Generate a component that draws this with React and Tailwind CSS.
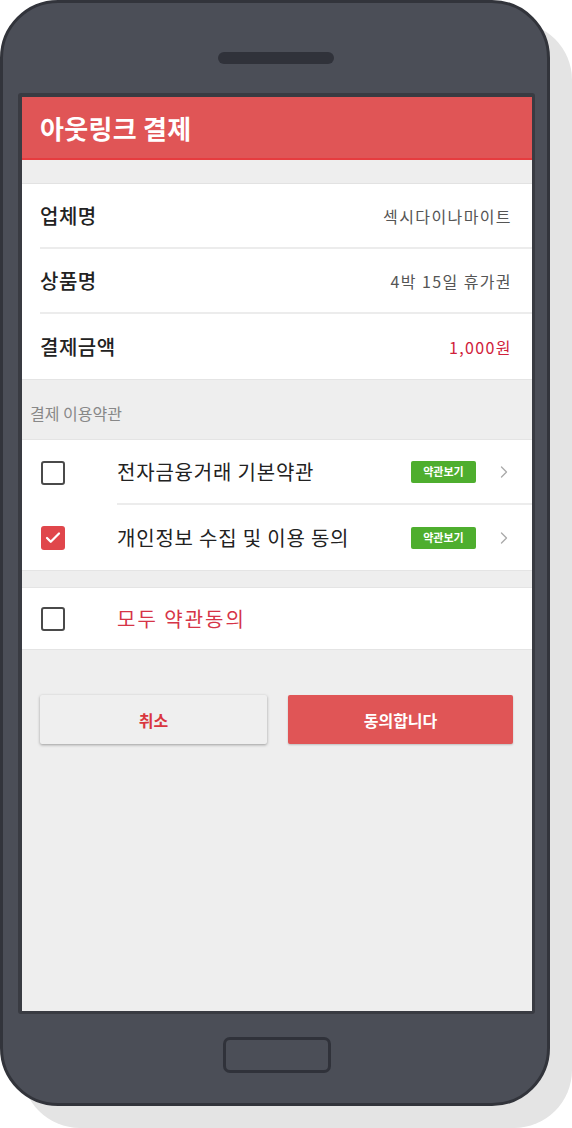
import { ChevronRight, Check } from "lucide-react";

const font = { fontFamily: '"Noto Sans CJK KR", "Noto Sans", sans-serif' };

const infoRows = [
  { label: "업체명", value: "섹시다이나마이트", red: false },
  { label: "상품명", value: "4박 15일 휴가권", red: false },
  { label: "결제금액", value: "1,000원", red: true },
];

const terms = [
  { title: "전자금융거래 기본약관", checked: false },
  { title: "개인정보 수집 및 이용 동의", checked: true },
];

function Box({ checked }) {
  if (checked) {
    return (
      <div className="w-[24px] h-[24px] rounded-[3px] bg-[#e0464b] flex items-center justify-center shrink-0">
        <Check size={18} strokeWidth={3} className="text-white" />
      </div>
    );
  }
  return <div className="w-[24px] h-[24px] rounded-[3px] border-[2.5px] border-[#4a4a4a] bg-white shrink-0" />;
}

export default function App() {
  return (
    <div className="w-[572px] h-[1128px] bg-white" style={font}>
      <div className="w-[550px] h-[1106px] rounded-[58px] bg-[#4b4e57] border-[3px] border-[#32343b] shadow-[22px_22px_0_#e4e4e4] flex flex-col">
        {/* speaker */}
        <div className="mt-[49px] ml-[215px] w-[116px] h-[12px] rounded-full bg-[#30323a]" />

        {/* screen */}
        <div className="mt-[29px] ml-[15px] w-[517px] h-[921px] border-l-4 border-t-4 border-r-[3px] border-b-[3px] border-[#393b42] rounded-[3px] bg-[#eeeeee] flex flex-col overflow-hidden">
          <div className="h-[63px] bg-[#e05556] border-b-2 border-[#e63c3f] flex items-center px-[18px]">
            <h1 className="text-white text-[26px] font-bold tracking-[0.3px]">아웃링크 결제</h1>
          </div>

          <div className="h-[23px]" />

          <div className="bg-white border-t border-[#e2e2e2]">
            {infoRows.map((r, i) => (
              <div key={r.label} className="pl-[18px]">
                <div
                  className={`h-[65px] flex items-center justify-between pr-[20px] ${
                    i < infoRows.length - 1 ? "border-b-2 border-[#ececec]" : ""
                  }`}
                >
                  <span className="text-[20px] font-medium text-[#222] tracking-[0.5px]">{r.label}</span>
                  <span className={`text-[16px] tracking-[1.4px] ${r.red ? "text-[#d0213a]" : "text-[#555]"}`}>
                    {r.value}
                  </span>
                </div>
              </div>
            ))}
          </div>

          <div className="h-[60px] border-t border-[#e4e4e4] flex items-end pb-[14px] pl-[8px]">
            <span className="text-[16px] text-[#888]">결제 이용약관</span>
          </div>

          <div className="bg-white border-t border-[#e4e4e4]">
            {terms.map((t, i) => (
              <div key={t.title} className="h-[65px] flex items-center pl-[19px]">
                <Box checked={t.checked} />
                <div
                  className={`ml-[52px] flex-1 h-full flex items-center pr-[20px] ${
                    i < terms.length - 1 ? "border-b-2 border-[#ececec]" : ""
                  }`}
                >
                  <span className="flex-1 text-[20px] text-[#222] tracking-[0.8px]">{t.title}</span>
                  <span className="w-[65px] h-[22px] rounded-[2px] bg-[#4eae2e] text-white text-[11px] font-bold flex items-center justify-center">
                    약관보기
                  </span>
                  <ChevronRight size={20} strokeWidth={1.6} className="ml-[18px] mr-[-2px] text-[#aaa]" />
                </div>
              </div>
            ))}
          </div>

          <div className="h-[17px] border-t border-[#e4e4e4]" />

          <div className="h-[63px] bg-white border-t border-[#e4e4e4] border-b border-b-[#e4e4e4] flex items-center pl-[19px]">
            <Box checked={false} />
            <span className="ml-[52px] text-[20px] text-[#d63447] tracking-[2px]">모두 약관동의</span>
          </div>

          <div className="mt-[45px] px-[18px] flex gap-[21px]">
            <button className="w-[227px] h-[49px] rounded-[2px] bg-[#efefef] shadow-[0_1px_3px_rgba(0,0,0,0.35)] text-[#d9363e] text-[16px] font-bold">
              취소
            </button>
            <button className="w-[225px] h-[49px] rounded-[2px] bg-[#e05556] shadow-[0_1px_2px_rgba(0,0,0,0.2)] text-white text-[16px] font-bold">
              동의합니다
            </button>
          </div>
        </div>

        {/* home button */}
        <div className="mt-[23px] ml-[220px] w-[108px] h-[36px] rounded-[7px] border-[3px] border-[#30323a]" />
      </div>
    </div>
  );
}
